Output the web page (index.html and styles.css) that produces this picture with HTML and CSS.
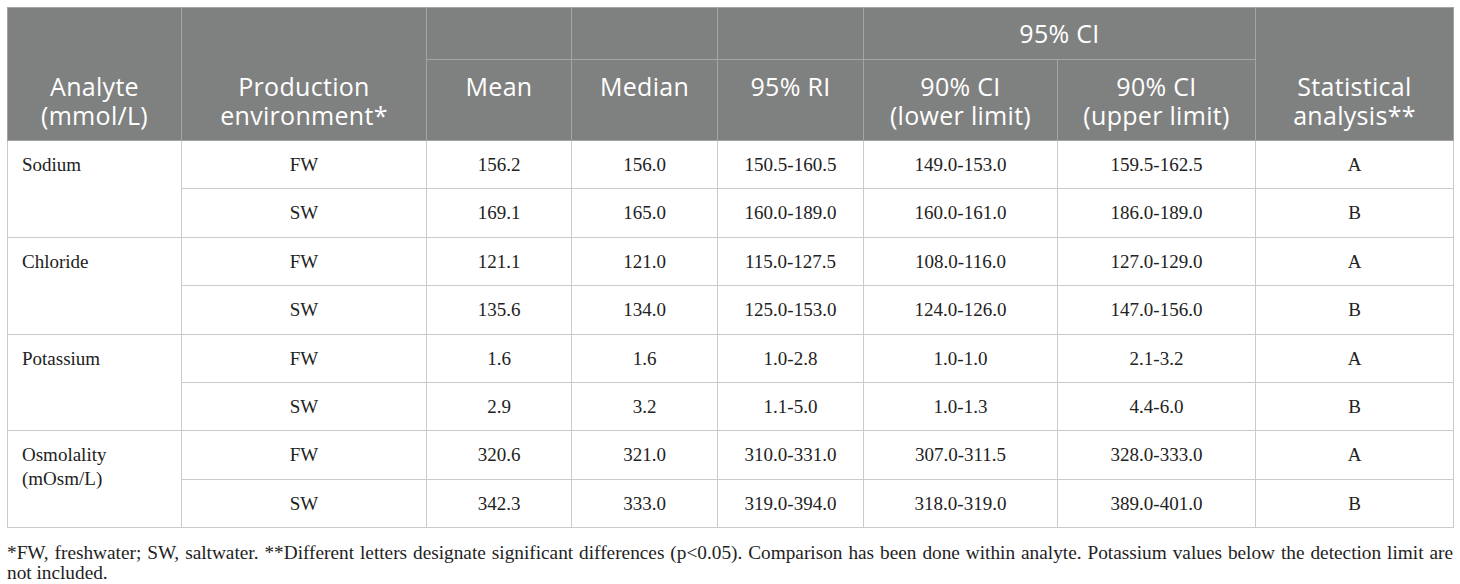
FILE: index.html
```html
<!DOCTYPE html>
<html lang="en">
  <head>
    <meta charset="UTF-8" />
    <title>Reference intervals by production environment</title>
    <link rel="stylesheet" href="styles.css">
  </head>
  <body>
    <div class="table-wrap">
      <table class="data-table">
        <colgroup>
          <col style="width: 174px" />
          <col style="width: 245px" />
          <col style="width: 145px" />
          <col style="width: 146px" />
          <col style="width: 146px" />
          <col style="width: 194px" />
          <col style="width: 198px" />
          <col style="width: 198px" />
        </colgroup>
        <thead>
          <tr class="head-top">
            <th rowspan="2" class="span-cell">Analyte<br />(mmol/L)</th>
            <th rowspan="2" class="span-cell">Production<br />environment*</th>
            <th></th>
            <th></th>
            <th></th>
            <th colspan="2">95% CI</th>
            <th rowspan="2" class="span-cell">Statistical<br />analysis**</th>
          </tr>
          <tr class="head-sub">
            <th>Mean</th>
            <th>Median</th>
            <th>95% RI</th>
            <th>90% CI<br />(lower limit)</th>
            <th>90% CI<br />(upper limit)</th>
          </tr>
        </thead>
        <tbody>
          <tr>
            <td rowspan="2" class="analyte">Sodium</td>
            <td>FW</td><td>156.2</td><td>156.0</td><td>150.5-160.5</td><td>149.0-153.0</td><td>159.5-162.5</td><td>A</td>
          </tr>
          <tr>
            <td>SW</td><td>169.1</td><td>165.0</td><td>160.0-189.0</td><td>160.0-161.0</td><td>186.0-189.0</td><td>B</td>
          </tr>
          <tr>
            <td rowspan="2" class="analyte">Chloride</td>
            <td>FW</td><td>121.1</td><td>121.0</td><td>115.0-127.5</td><td>108.0-116.0</td><td>127.0-129.0</td><td>A</td>
          </tr>
          <tr>
            <td>SW</td><td>135.6</td><td>134.0</td><td>125.0-153.0</td><td>124.0-126.0</td><td>147.0-156.0</td><td>B</td>
          </tr>
          <tr>
            <td rowspan="2" class="analyte">Potassium</td>
            <td>FW</td><td>1.6</td><td>1.6</td><td>1.0-2.8</td><td>1.0-1.0</td><td>2.1-3.2</td><td>A</td>
          </tr>
          <tr>
            <td>SW</td><td>2.9</td><td>3.2</td><td>1.1-5.0</td><td>1.0-1.3</td><td>4.4-6.0</td><td>B</td>
          </tr>
          <tr>
            <td rowspan="2" class="analyte">Osmolality<br />(mOsm/L)</td>
            <td>FW</td><td>320.6</td><td>321.0</td><td>310.0-331.0</td><td>307.0-311.5</td><td>328.0-333.0</td><td>A</td>
          </tr>
          <tr>
            <td>SW</td><td>342.3</td><td>333.0</td><td>319.0-394.0</td><td>318.0-319.0</td><td>389.0-401.0</td><td>B</td>
          </tr>
        </tbody>
      </table>
      <p class="footnote">
        *FW, freshwater; SW, saltwater. **Different letters designate significant differences (p&lt;0.05). Comparison has been done within analyte. Potassium values below the detection limit are not included.
      </p>
    </div>
  </body>
</html>
```

FILE: styles.css
```css
body {
  margin: 0;
  background-color: #fff;
}

.table-wrap {
  padding: 7px 7px 0 7px;
}

.data-table {
  width: 1446px;
  border-collapse: collapse;
  table-layout: fixed;
}

th {
  background-color: #7f8180;
  color: #fff;
  font-family: "Open Sans", "Noto Sans", sans-serif;
  font-size: 25px;
  font-weight: normal;
  letter-spacing: 0.3px;
  line-height: 29px;
  border: 1px solid #a3a5a4;
  padding: 0 4px;
  text-align: center;
}

.head-top {
  height: 52px;
}

.head-sub {
  height: 81px;
}

.head-sub th {
  vertical-align: top;
  padding-top: 12px;
}

.head-top th.span-cell {
  vertical-align: bottom;
  padding-bottom: 10px;
}

td {
  font-family: "Liberation Serif", "Times New Roman", serif;
  font-size: 19px;
  line-height: 24px;
  color: #222;
  border: 1px solid #cbcbcb;
  padding: 12px 6px 11.4px 6px;
  height: 24px;
  text-align: center;
}

td.analyte {
  text-align: left;
  vertical-align: top;
  padding-left: 14px;
}

.footnote {
  margin: 15px 0 0 0;
  font-family: "Liberation Serif", "Times New Roman", serif;
  font-size: 19.3px;
  line-height: 20px;
  color: #222;
  text-align: justify;
}
```
